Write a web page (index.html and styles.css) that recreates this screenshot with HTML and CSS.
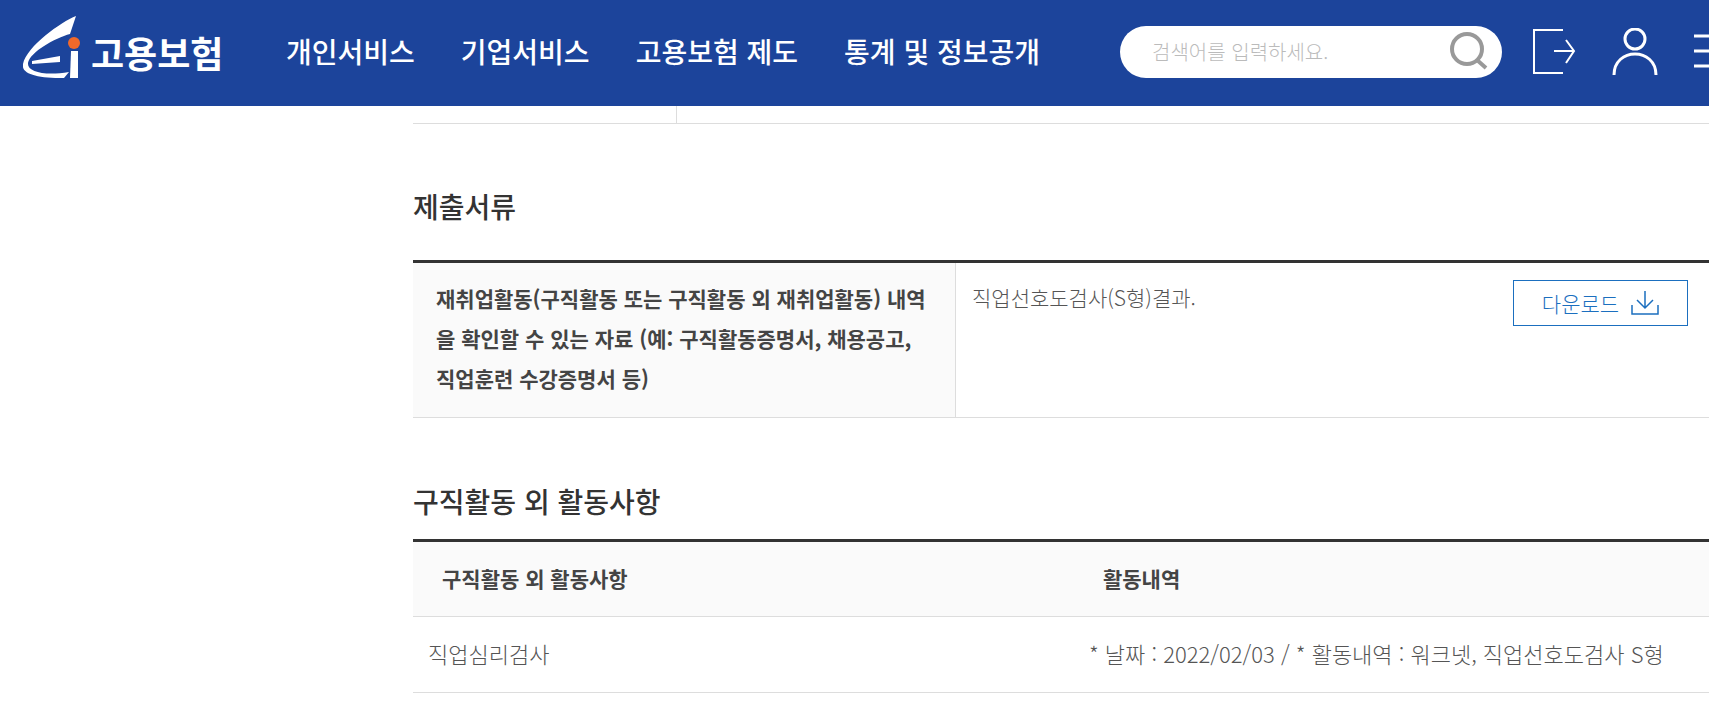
FILE: index.html
```html
<!DOCTYPE html>
<html lang="ko">
<head>
    <meta charset="UTF-8">
    <meta name="viewport" content="width=device-width, initial-scale=1.0">
    <title>고용보험</title>
    <link rel="stylesheet" href="styles.css">
</head>
<body>

<!-- 상단 메뉴 -->
<header class="header">
    <a href="#" class="logo">
        <svg class="logo-mark" viewBox="0 0 58 62" aria-hidden="true">
            <path d="M53 0 C38 6 4 30 0 48 C-2 58 14 62 41 62 L46 56 C22 60 4 56 5 47 C7 36 32 22 47 18 Z" fill="#fff"/>
            <path d="M9 45 L37 40 L37 46 L9 48 Z" fill="#fff"/>
            <circle cx="51" cy="27" r="6" fill="#f0692b"/>
            <path d="M48 35 H55 V62 H47 Z" fill="#fff"/>
        </svg>
        <span class="logo-text">고용보험</span>
    </a>
    <nav class="nav">
        <a href="#">개인서비스</a>
        <a href="#">기업서비스</a>
        <a href="#">고용보험 제도</a>
        <a href="#">통계 및 정보공개</a>
    </nav>
    <form class="search">
        <input type="text" class="search-input" placeholder="검색어를 입력하세요." aria-label="검색어">
        <button type="button" class="icon-btn" aria-label="검색">
            <svg width="38" height="38" viewBox="0 0 38 38" fill="none" stroke="#999">
                <circle cx="17" cy="17" r="15" stroke-width="4"/>
                <path d="M27 28 L36 36" stroke-width="4"/>
            </svg>
        </button>
    </form>
    <div class="util">
        <button type="button" class="icon-btn" aria-label="로그아웃">
            <svg width="44" height="48" viewBox="0 0 44 48" fill="none" stroke="#fff" stroke-width="2">
                <path d="M31 2 H2 V45 H31 M22 23 H42 M34 12 L42 23 L34 35"/>
            </svg>
        </button>
        <button type="button" class="icon-btn" aria-label="마이페이지">
            <svg width="46" height="48" viewBox="0 0 46 48" fill="none" stroke="#fff" stroke-width="3">
                <circle cx="23" cy="11" r="10"/>
                <path d="M2 47 C2 19 44 19 44 47"/>
            </svg>
        </button>
        <button type="button" class="icon-btn" aria-label="전체메뉴">
            <svg width="44" height="48" viewBox="0 0 44 48" fill="none" stroke="#fff" stroke-width="3">
                <path d="M0 8 H44 M0 23 H44 M0 38 H44"/>
            </svg>
        </button>
    </div>
</header>

<main class="content">
    <table class="table table-prev">
        <tr>
            <td class="prev-name"></td>
            <td></td>
        </tr>
    </table>

    <!-- 제출서류 -->
    <h2 class="title title-docs">제출서류</h2>
    <table class="table table-docs">
        <tr>
            <th scope="row">재취업활동(구직활동 또는 구직활동 외 재취업활동) 내역<br>을 확인할 수 있는 자료 (예: 구직활동증명서, 채용공고,<br>직업훈련 수강증명서 등)</th>
            <td>
                <div class="file">
                    <span>직업선호도검사(S형)결과.</span>
                    <button type="button" class="download">
                        다운로드
                        <svg width="28" height="24" viewBox="0 0 28 24" fill="none" stroke="#1b6fbf" stroke-width="2" aria-hidden="true">
                            <path d="M1 14 V23 H27 V14" stroke-width="1.5"/>
                            <path d="M14 0 V17 M6 9 L14 17 L22 9" stroke-width="1.5"/>
                        </svg>
                    </button>
                </div>
            </td>
        </tr>
    </table>

    <!-- 구직활동 외 활동사항 -->
    <h2 class="title title-activity">구직활동 외 활동사항</h2>
    <table class="table table-activity">
        <thead>
            <tr>
                <th scope="col">구직활동 외 활동사항</th>
                <th scope="col">활동내역</th>
            </tr>
        </thead>
        <tbody>
            <tr>
                <td>직업심리검사</td>
                <td>* 날짜 : 2022/02/03 / * 활동내역 : 워크넷, 직업선호도검사 S형</td>
            </tr>
        </tbody>
    </table>
</main>

</body>
</html>
```
FILE: styles.css
```css
* {
    box-sizing: border-box;
}
body {
    margin: 0;
    background-color: #fff;
    color: #555;
    font-family: "Noto Sans CJK KR", sans-serif;
    font-size: 21px;
    font-weight: 300;
}
a {
    color: inherit;
    text-decoration: none;
}
button {
    font: inherit;
    cursor: pointer;
}

/* header */
.header {
    display: flex;
    align-items: center;
    height: 106px;
    padding: 0 0 2px 23px;
    background-color: #1c449b;
    color: #fff;
    overflow: hidden;
    white-space: nowrap;
}
.header > * {
    flex-shrink: 0;
}
.logo {
    display: flex;
    align-items: center;
    gap: 10px;
    width: 263px;
    padding-bottom: 10px;
}
.logo-mark {
    width: 58px;
    height: 62px;
}
.logo-text {
    padding-top: 10px;
    font-size: 36px;
    font-weight: 700;
    line-height: 40px;
}
.nav {
    display: flex;
    gap: 46px;
    padding-bottom: 2px;
    font-size: 28px;
    font-weight: 500;
}
.search {
    display: flex;
    align-items: center;
    width: 382px;
    height: 52px;
    margin-left: 80px;
    padding: 0 14px 2px 32px;
    border-radius: 26px;
    background-color: #fff;
}
.search-input {
    flex: 1;
    min-width: 0;
    padding: 0;
    border: 0;
    outline: 0;
    background: none;
    font: inherit;
    font-size: 20px;
}
.search-input::placeholder {
    color: #bbb;
    opacity: 1;
}
.icon-btn {
    display: flex;
    padding: 0;
    border: 0;
    background: none;
}
.util {
    display: flex;
    gap: 36px;
    margin-left: 30px;
}

/* content */
.content {
    padding-left: 413px;
}
.title {
    margin: 0;
    color: #333;
    font-size: 28px;
    font-weight: 500;
    line-height: 40px;
}
.title-docs {
    padding: 62px 0 34px;
}
.title-activity {
    padding: 63px 0 18px;
}
.table {
    width: 100%;
    border-collapse: separate;
    border-spacing: 0;
    table-layout: fixed;
}
.table th,
.table td {
    border-bottom: 1px solid #ddd;
    text-align: left;
}
.table th {
    background-color: #fafafa;
    color: #444;
    font-size: 21px;
    font-weight: 700;
}
.table-prev td {
    height: 18px;
    padding: 0;
}
.table-prev .prev-name {
    width: 264px;
    border-right: 1px solid #ddd;
}
.table-docs,
.table-activity {
    border-top: 3px solid #333;
}
.table-docs th {
    width: 543px;
    padding: 15px 0 19px 23px;
    border-right: 1px solid #ddd;
    line-height: 40px;
    white-space: nowrap;
}
.table-docs td {
    padding: 17px 21px 17px 16px;
    vertical-align: top;
}
.file {
    display: flex;
    justify-content: space-between;
    line-height: 34px;
}
.download {
    display: flex;
    align-items: center;
    justify-content: center;
    gap: 12px;
    width: 175px;
    height: 46px;
    padding: 0;
    border: 1px solid #1b6fbf;
    background-color: #fff;
    color: #1b6fbf;
}
.table-activity th,
.table-activity td {
    height: 75px;
    padding: 0 15px 3px;
    white-space: nowrap;
}
.table-activity th {
    padding-left: 29px;
}
.table-activity th:first-child {
    width: 51%;
}
.table-activity td {
    height: 76px;
    font-size: 22px;
}
```
